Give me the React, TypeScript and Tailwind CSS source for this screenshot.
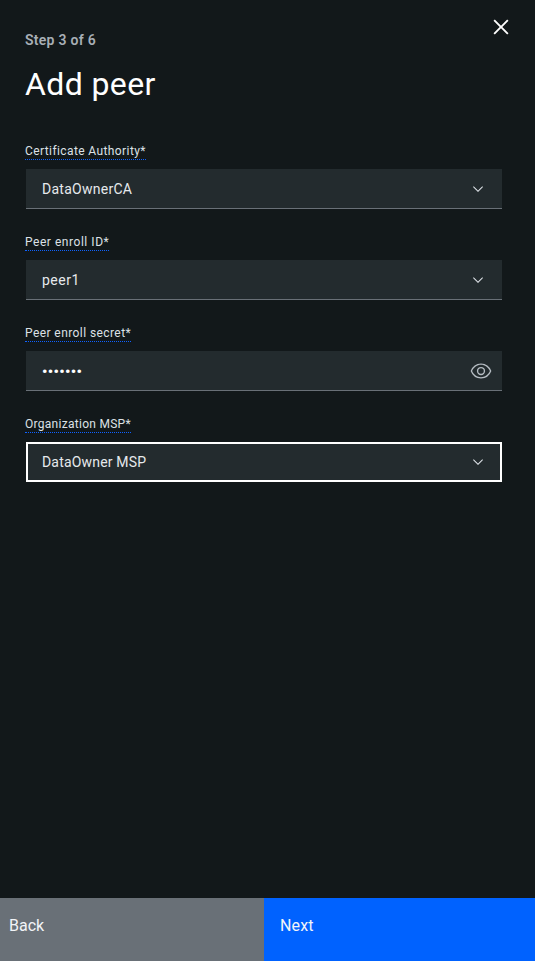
import React from "react";

function ChevronDown() {
  return (
    <svg viewBox="0 0 16 16" className="mr-4 size-4 shrink-0 fill-[#dde1e6]" aria-hidden="true">
      <path d="M8 11 3 6 3.7 5.3 8 9.6 12.3 5.3 13 6z" />
    </svg>
  );
}

function ViewIcon() {
  return (
    <svg viewBox="0 0 32 32" className="mt-px mr-2.5 size-[22px] shrink-0 fill-[#b5bcc2]" aria-hidden="true">
      <path d="M30.94 15.66A16.69 16.69 0 0 0 16 5 16.69 16.69 0 0 0 1.06 15.66a1 1 0 0 0 0 .68A16.69 16.69 0 0 0 16 27a16.69 16.69 0 0 0 14.94-10.66 1 1 0 0 0 0-.68zM16 25c-5.3 0-10.9-3.93-12.93-9C5.1 10.93 10.7 7 16 7s10.9 3.93 12.93 9C26.9 21.07 21.3 25 16 25z" />
      <path d="M16 10a6 6 0 1 0 6 6 6 6 0 0 0-6-6zm0 10a4 4 0 1 1 4-4 4 4 0 0 1-4 4z" />
    </svg>
  );
}

type FieldProps = {
  label: string;
  labelClass: string;
  focused?: boolean;
  icon: React.ReactNode;
  children: React.ReactNode;
};

function Field({ label, labelClass, focused, icon, children }: FieldProps) {
  return (
    <div className="flex h-[91px] flex-col items-start">
      <div className={`h-[18px] border-b border-dotted border-[#0f62fe] text-[12px] leading-[19px] whitespace-nowrap text-[#dde1e6] ${labelClass}`}>
        {label}
      </div>
      <div
        className={`mt-[9px] ml-px flex h-10 w-[476px] items-center justify-between bg-[#232b2e] text-[14px] leading-[18px] text-[#e6e9ec] ${
          focused ? "border-2 border-white pl-3.5 [&>svg]:mr-3.5" : "border-b border-[#697077] pl-4"
        }`}
      >
        {children}
        {icon}
      </div>
    </div>
  );
}

export default function App() {
  return (
    <div className="flex h-[961px] w-[535px] flex-col overflow-hidden bg-[#12181a] font-['Roboto','Liberation_Sans',sans-serif]">
      <header className="flex h-[142px] justify-between pr-[19px] pl-[25px]">
        <div>
          <p className="mt-[31px] text-[14px] leading-[18px] font-semibold tracking-[0.28px] text-[#a8afb6]">Step 3 of 6</p>
          <h1 className="mt-[15px] text-[32px] leading-10 font-normal tracking-[0.4px] text-white">Add peer</h1>
        </div>
        <button className="mt-3 size-[30px]" aria-label="Close">
          <svg viewBox="0 0 32 32" className="size-[30px] fill-white">
            <path d="M24 9.4 22.6 8 16 14.6 9.4 8 8 9.4l6.6 6.6L8 22.6 9.4 24l6.6-6.6 6.6 6.6 1.4-1.4-6.6-6.6L24 9.4z" />
          </svg>
        </button>
      </header>
      <main className="flex-1 pl-[25px]">
        <Field label="Certificate Authority*" labelClass="w-[121px] tracking-[0.4px]" icon={<ChevronDown />}>
          <span className="tracking-[0.26px]">DataOwnerCA</span>
        </Field>
        <Field label="Peer enroll ID*" labelClass="w-[84px] tracking-[0.54px]" icon={<ChevronDown />}>
          <span className="tracking-[0.5px]">peer1</span>
        </Field>
        <Field label="Peer enroll secret*" labelClass="w-[106px] tracking-[0.42px]" icon={<ViewIcon />}>
          <span className="mt-0.5 text-[15px] font-bold tracking-[0.35px] text-white">•••••••</span>
        </Field>
        <Field label="Organization MSP*" labelClass="w-[106px] tracking-[0.28px]" icon={<ChevronDown />} focused>
          <span className="tracking-[0.18px]">DataOwner MSP</span>
        </Field>
      </main>
      <footer className="flex h-[63px] text-[16px] leading-5 text-[#f2f4f8]">
        <button className="flex w-[264px] items-start bg-[#697077] pt-[18px] pl-[9px]">Back</button>
        <button className="flex flex-1 items-start bg-[#0062ff] pt-[18px] pl-4 tracking-[0.15px]">Next</button>
      </footer>
    </div>
  );
}
